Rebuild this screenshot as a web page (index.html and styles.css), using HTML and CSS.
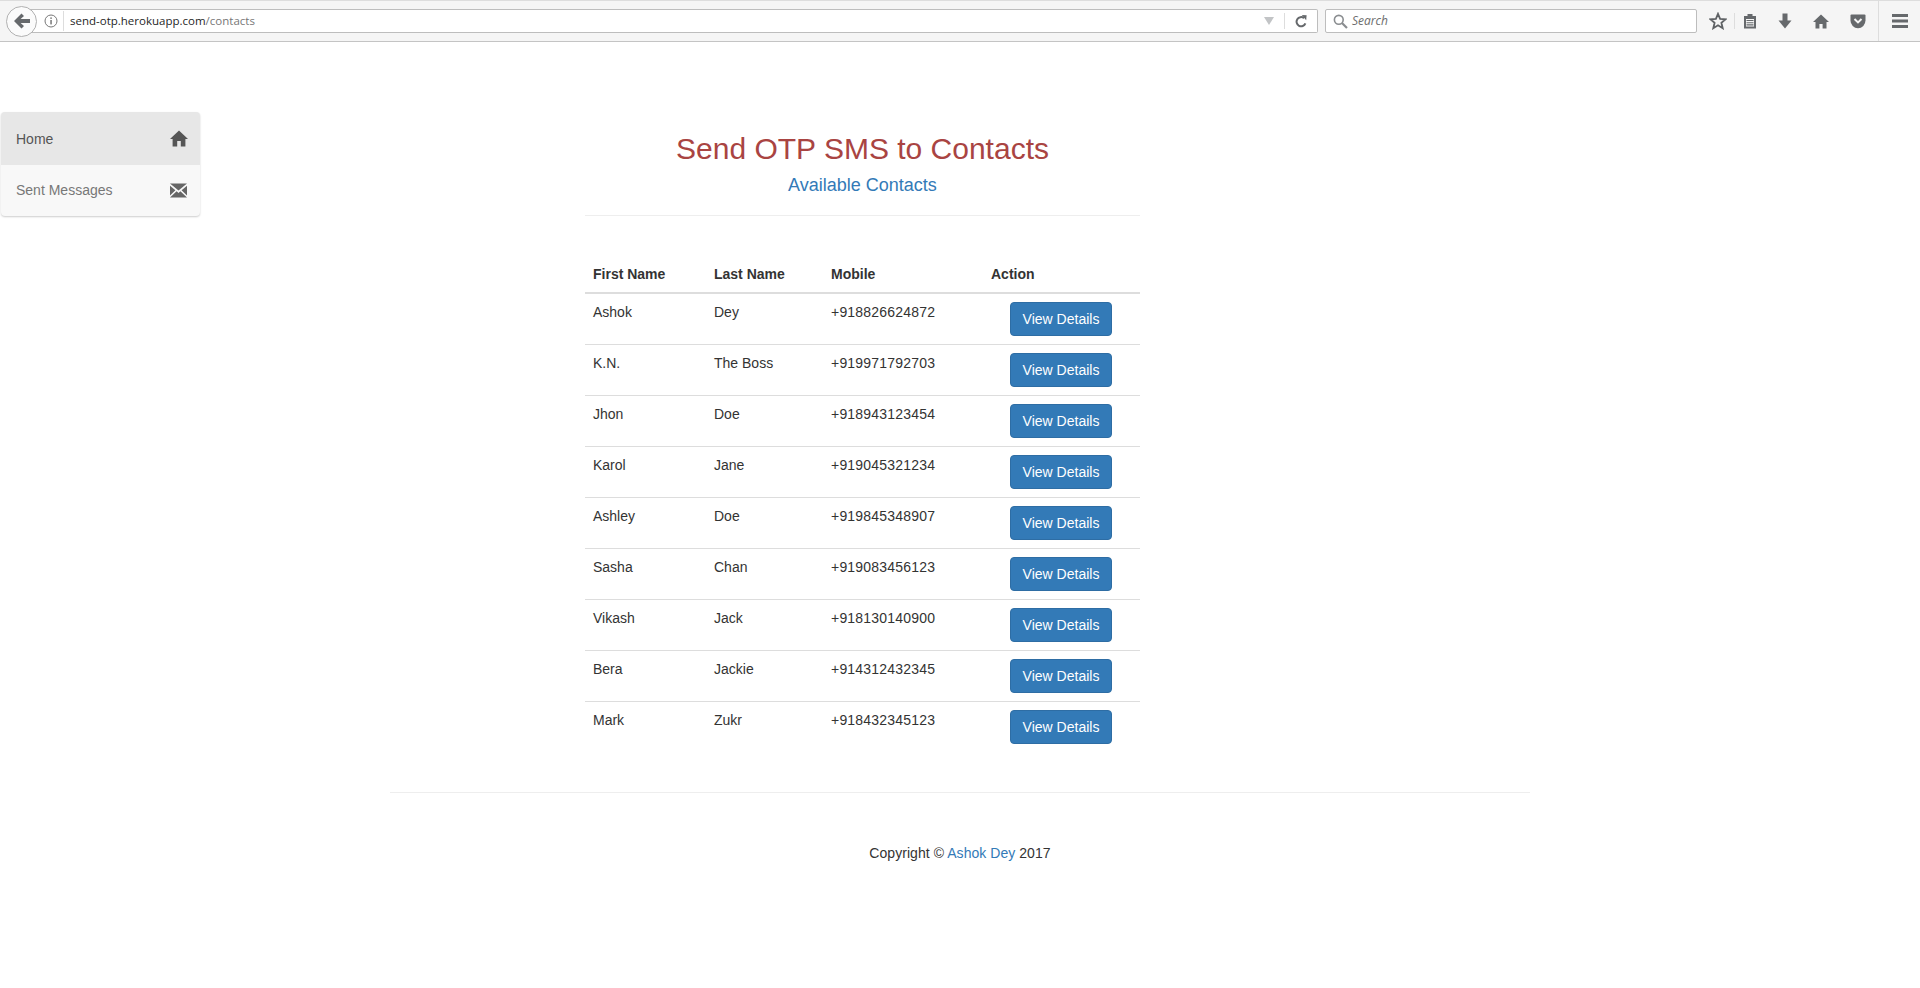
FILE: index.html
```html
<!DOCTYPE html>
<html lang="en">

<head>
    <meta charset="UTF-8">
    <title>Send OTP SMS to Contacts</title>
    <link rel="stylesheet" href="styles.css">
</head>

<body>
    <!-- Browser toolbar -->
    <div class="browser-bar">
        <button class="back-btn">
            <svg width="18" height="16" viewBox="0 0 18 16"><path d="M8.5 0.5 L1 8 L8.5 15.5 L11 13 L7.6 9.9 H17 V6.1 H7.6 L11 3 Z" fill="#66696c"/></svg>
        </button>
        <div class="url-box">
            <svg class="info-icon" width="14" height="14" viewBox="0 0 14 14"><circle cx="7" cy="7" r="6" fill="none" stroke="#777" stroke-width="1"/><rect x="6.3" y="6" width="1.5" height="4.4" fill="#777"/><rect x="6.3" y="3.4" width="1.5" height="1.5" fill="#777"/></svg>
            <span class="url-text">send-otp.herokuapp.com<span class="url-path">/contacts</span></span>
            <svg class="url-arrow" width="10" height="8" viewBox="0 0 10 8"><path d="M0 0 H10 L5 8 Z" fill="#c2c4c6"/></svg>
            <span class="reload">
                <svg width="12" height="13" viewBox="0 0 12 13"><path d="M10.4 8.4 A4.6 4.6 0 1 1 9 3.1" fill="none" stroke="#66696c" stroke-width="2"/><path d="M6.8 0 L11.6 0.3 L11.2 5.2 Z" fill="#66696c"/></svg>
            </span>
        </div>
        <div class="search-box">
            <svg width="15" height="15" viewBox="0 0 15 15"><circle cx="5.8" cy="5.8" r="4.4" fill="none" stroke="#8a8d90" stroke-width="1.6"/><path d="M9 9 L14 14" stroke="#8a8d90" stroke-width="2.2"/></svg>
            <span class="search-text">Search</span>
        </div>
        <div class="bar-icons">
            <svg class="star" width="18" height="18" viewBox="0 0 18 18"><path d="M9 1.8 L11.1 6.9 L16.6 7.3 L12.4 10.8 L13.7 16.2 L9 13.3 L4.3 16.2 L5.6 10.8 L1.4 7.3 L6.9 6.9 Z" fill="none" stroke="#5f6265" stroke-width="1.8"/></svg>
            <span class="bar-sep star-sep"></span>
            <svg class="clip" width="14" height="16" viewBox="0 0 14 16"><path d="M1 3 H4.5 V1 H9.5 V3 H13 V15.5 H1 Z" fill="#66696c"/><path d="M3 6 H11 V13.5 H3 Z" fill="#f5f5f5"/><path d="M3.5 7.5 H10.5 M3.5 9.7 H10.5 M3.5 11.9 H10.5" stroke="#66696c" stroke-width="1.1"/></svg>
            <svg class="down" width="14" height="16" viewBox="0 0 14 16"><path d="M4.5 0.5 H9.5 V7.5 H13.5 L7 15.5 L0.5 7.5 H4.5 Z" fill="#66696c"/></svg>
            <svg class="home" width="16" height="15" viewBox="0 0 16 15"><path d="M8 0.5 L16 8 H13.5 V14.5 H9.6 V10 H6.4 V14.5 H2.5 V8 H0 Z" fill="#66696c"/></svg>
            <svg class="pocket" width="16" height="15" viewBox="0 0 16 15"><path d="M1.5 0.5 H14.5 Q15.5 0.5 15.5 1.5 V6.5 A7.5 7.8 0 0 1 0.5 6.5 V1.5 Q0.5 0.5 1.5 0.5 Z" fill="#66696c"/><path d="M4.5 5 L8 8.4 L11.5 5" fill="none" stroke="#f5f5f5" stroke-width="2"/></svg>
            <span class="bar-sep menu-sep"></span>
            <svg class="menu" width="16" height="14" viewBox="0 0 16 14"><path d="M0 0 H16 V3 H0 Z M0 5.5 H16 V8.5 H0 Z M0 11 H16 V14 H0 Z" fill="#66696c"/></svg>
        </div>
    </div>

    <div class="layout">
        <ul class="side-nav">
            <li class="active">
                <span>Home</span>
                <svg width="18" height="17" viewBox="0 0 18 17"><path d="M9 0.5 L18 9 H15.4 V16.5 H10.8 V11 H7.2 V16.5 H2.6 V9 H0 Z" fill="#555"/></svg>
            </li>
            <li>
                <span>Sent Messages</span>
                <svg class="mail-icon" width="17" height="15" viewBox="0 0 17 15"><path d="M0 0.5 H17 L8.5 7.6 Z M0 2.8 L5.4 7.3 L0 12.4 Z M17 2.8 L11.6 7.3 L17 12.4 Z M6.6 8.3 L8.5 9.9 L10.4 8.3 L17 14.5 H0 Z" fill="#666"/></svg>
            </li>
        </ul>

        <div class="content">
            <h2>Send OTP SMS to Contacts</h2>
            <h4>Available Contacts</h4>
            <hr>
            <table class="contacts">
                <thead>
                    <tr>
                        <th class="col-first">First Name</th>
                        <th class="col-last">Last Name</th>
                        <th class="col-mobile">Mobile</th>
                        <th>Action</th>
                    </tr>
                </thead>
                <tbody>
                    <tr><td>Ashok</td><td>Dey</td><td class="mobile">+918826624872</td><td><button class="btn">View Details</button></td></tr>
                    <tr><td>K.N.</td><td>The Boss</td><td class="mobile">+919971792703</td><td><button class="btn">View Details</button></td></tr>
                    <tr><td>Jhon</td><td>Doe</td><td class="mobile">+918943123454</td><td><button class="btn">View Details</button></td></tr>
                    <tr><td>Karol</td><td>Jane</td><td class="mobile">+919045321234</td><td><button class="btn">View Details</button></td></tr>
                    <tr><td>Ashley</td><td>Doe</td><td class="mobile">+919845348907</td><td><button class="btn">View Details</button></td></tr>
                    <tr><td>Sasha</td><td>Chan</td><td class="mobile">+919083456123</td><td><button class="btn">View Details</button></td></tr>
                    <tr><td>Vikash</td><td>Jack</td><td class="mobile">+918130140900</td><td><button class="btn">View Details</button></td></tr>
                    <tr><td>Bera</td><td>Jackie</td><td class="mobile">+914312432345</td><td><button class="btn">View Details</button></td></tr>
                    <tr><td>Mark</td><td>Zukr</td><td class="mobile">+918432345123</td><td><button class="btn">View Details</button></td></tr>
                </tbody>
            </table>
        </div>
    </div>

    <footer class="footer">
        <hr>
        <p>Copyright &copy; <a href="#">Ashok Dey</a> 2017</p>
    </footer>
</body>

</html>
```

FILE: styles.css
```css
* {
    box-sizing: border-box;
}

body {
    font-family: "Liberation Sans", Arial, sans-serif;
    font-size: 14px;
    line-height: 20px;
    margin: 0;
    background: #fff;
    color: #333;
}

/* Browser toolbar */
.browser-bar {
    height: 42px;
    display: flex;
    align-items: center;
    padding-left: 6px;
    background-color: #f5f5f5;
    border-top: 1px solid #ddd;
    border-bottom: 1px solid #c4c4c4;
    background-image: linear-gradient(to right, #ddd 233px, #8a5f85 233px);
    background-size: 100% 1px;
    background-repeat: no-repeat;
    background-position: 0 -1px;
    background-origin: border-box;
}

.back-btn {
    width: 31px;
    height: 31px;
    flex: none;
    position: relative;
    z-index: 1;
    padding: 0;
    display: flex;
    align-items: center;
    justify-content: center;
    background: #fbfbfb;
    border: 1px solid #b1b1b1;
    border-radius: 50%;
}

.url-box {
    width: 1288px;
    height: 24px;
    flex: none;
    margin-left: -7px;
    padding-left: 14px;
    display: flex;
    align-items: center;
    background: #fff;
    border: 1px solid #bdbdbd;
    border-left: none;
    border-radius: 0 2px 2px 0;
}

.info-icon {
    flex: none;
}

.url-text {
    font-family: "Open Sans", sans-serif;
    font-size: 11.5px;
    color: #1f1f1f;
    margin-left: 5px;
    padding-left: 6px;
    border-left: 1px solid #ddd;
    line-height: 20px;
    flex: 1;
}

.url-path {
    color: #777;
}

.url-arrow {
    flex: none;
    margin-right: 10px;
}

.reload {
    width: 33px;
    height: 16px;
    flex: none;
    display: flex;
    align-items: center;
    justify-content: center;
    border-left: 1px solid #ddd;
}

.search-box {
    width: 372px;
    height: 24px;
    flex: none;
    margin-left: 7px;
    padding-left: 7px;
    display: flex;
    align-items: center;
    gap: 4px;
    background: #fff;
    border: 1px solid #bdbdbd;
    border-radius: 2px;
}

.search-text {
    font-family: "Open Sans", sans-serif;
    font-size: 12px;
    font-style: italic;
    color: #6d6d6d;
}

.bar-icons {
    flex: 1;
    height: 100%;
    display: flex;
    align-items: center;
}

.bar-sep {
    width: 1px;
    flex: none;
    background: #ddd;
}

.star {
    margin-left: 12px;
}

.star-sep {
    height: 16px;
    margin-left: 7px;
}

.clip {
    margin-left: 8px;
}

.down {
    margin-left: 21px;
}

.home {
    margin-left: 21px;
}

.pocket {
    margin-left: 21px;
}

.menu-sep {
    height: 100%;
    margin-left: 12px;
}

.menu {
    margin-left: 13px;
}

/* Page */
.layout {
    display: flex;
    align-items: flex-start;
    margin-top: 70px;
}

.side-nav {
    width: 199px;
    flex: none;
    list-style-type: none;
    padding: 0;
    margin: 0 0 0 1px;
    background: #f8f8f8;
    border-radius: 4px;
    box-shadow: 0 1px 2px rgba(0, 0, 0, 0.2);
    overflow: hidden;
}

.side-nav li {
    height: 51px;
    padding: 0 12px 1px 15px;
    display: flex;
    align-items: center;
    justify-content: space-between;
    color: #777;
}

.side-nav li.active {
    height: 53px;
    padding-bottom: 0;
    background: #e7e7e7;
    color: #555;
}

.mail-icon {
    margin-right: 1px;
}

.content {
    width: 555px;
    margin-left: 385px;
}

h2 {
    font-size: 30px;
    font-weight: 500;
    line-height: 33px;
    text-align: center;
    color: #a94442;
    margin: 20px 0 10px;
}

h4 {
    font-size: 18px;
    font-weight: 500;
    line-height: 20px;
    text-align: center;
    color: #337ab7;
    margin: 10px 0;
}

hr {
    border: 0;
    border-top: 1px solid #eee;
    margin: 20px 0;
}

.contacts {
    width: 100%;
    margin-top: 40px;
    border-collapse: collapse;
    table-layout: fixed;
}

.contacts th {
    text-align: left;
    padding: 8px;
    border-bottom: 2px solid #ddd;
}

.contacts td {
    padding: 8px;
    vertical-align: top;
    border-top: 1px solid #ddd;
}

.contacts tbody tr:first-child td {
    border-top: 0;
}

.col-first {
    width: 121px;
}

.col-last {
    width: 117px;
}

.col-mobile {
    width: 160px;
}

.mobile {
    letter-spacing: 0.2px;
}

.btn {
    display: block;
    width: 102px;
    height: 34px;
    margin-left: 19px;
    padding: 0;
    font-family: inherit;
    font-size: 14px;
    color: #fff;
    background-color: #337ab7;
    border: 1px solid #2e6da4;
    border-radius: 4px;
}

.footer {
    width: 1140px;
    margin: 40px auto 0;
    text-align: center;
}

.footer hr {
    margin: 0;
}

.footer p {
    margin: 50px 0 0;
    letter-spacing: 0.05px;
}

.footer a {
    color: #337ab7;
    text-decoration: none;
}
```
